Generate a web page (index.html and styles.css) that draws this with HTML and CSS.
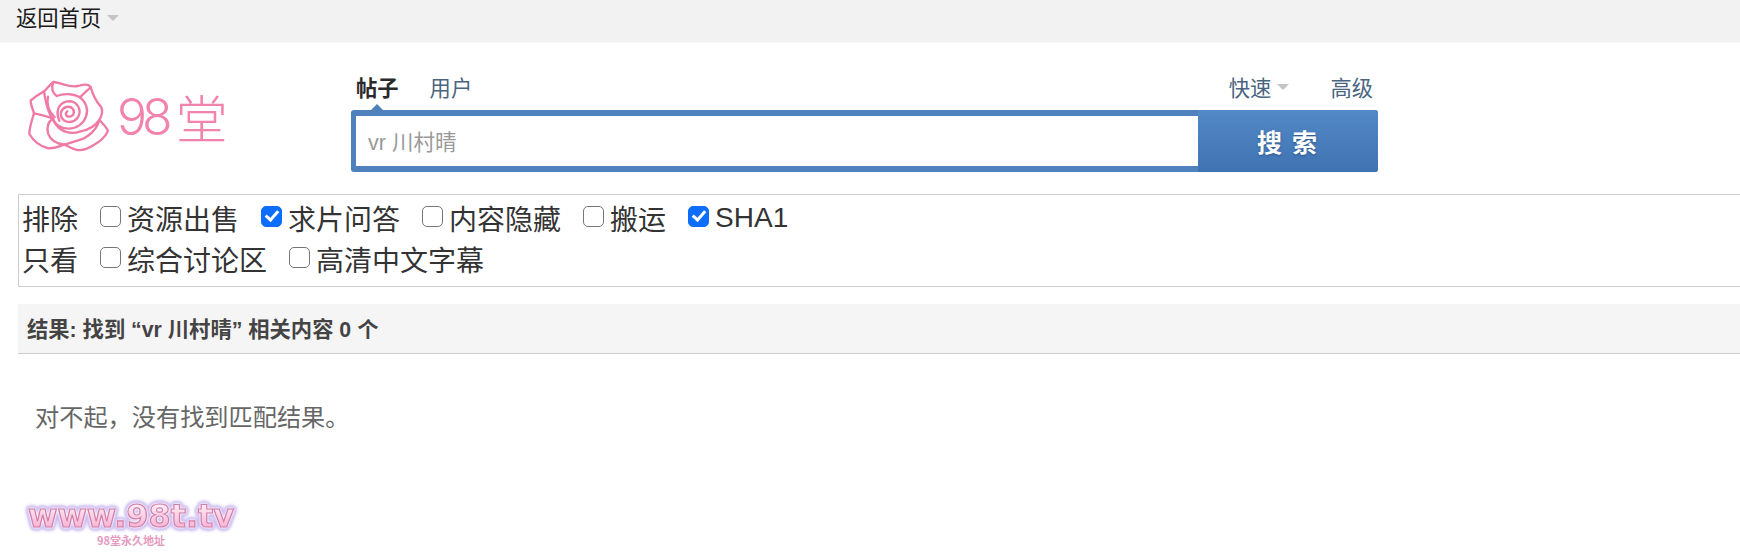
FILE: index.html
```html
<!DOCTYPE html>
<html>
  <head>
    <title>搜索 - 98堂</title>
    <link rel="stylesheet" href="styles.css">
  </head>
  <body>
    <div class="topbar">
      <a class="home-link">返回首页</a>
      <span class="caret"></span>
    </div>

    <div class="header">
      <div class="logo">
        <svg class="rose" viewBox="0 0 300 270">
          <g fill="none" stroke="#f07aa6" stroke-width="7" stroke-linecap="round" stroke-linejoin="round">
            <path d="M100 36 C125 38 150 54 172 48 C190 44 204 40 212 52 C218 72 226 92 244 112 C250 126 244 140 238 150 C248 160 258 170 264 182 C258 198 238 216 220 226 C205 236 190 242 172 240 C158 238 146 230 134 224 C118 228 100 238 82 234 C60 228 40 212 28 192 C28 172 36 150 42 130 C38 116 32 104 32 92 C44 80 60 72 72 64 C82 56 90 42 100 36 Z"/>
            <path d="M100 36 C92 54 98 70 110 78 C130 70 160 70 180 82 C198 96 206 118 198 140 C190 162 170 176 146 176 C124 176 104 164 98 146"/>
            <path d="M212 52 C200 62 190 72 180 82"/>
            <path d="M72 64 C76 90 84 130 98 146 C82 138 60 134 42 130"/>
            <path d="M98 146 C86 154 80 170 84 190 C92 212 112 222 134 224"/>
            <path d="M238 150 C224 170 204 180 182 184 C160 192 140 190 122 178 C112 170 104 160 98 146"/>
            <path d="M84 80 C78 104 88 128 104 142"/>
            <path d="M238 150 C232 176 206 204 172 212 C158 216 146 220 134 224"/>
            <path d="M118 152 C108 130 112 108 130 98 C150 88 172 96 178 118 C182 138 168 154 150 156 C130 156 118 140 124 124 C130 110 148 106 158 116 C166 126 160 140 148 140 C138 140 134 130 142 124"/>
          </g>
        </svg>
        <span class="logo-num">98</span>
        <span class="logo-han">堂</span>
      </div>

      <div class="search">
        <div class="search-tabs">
          <div class="tabs-left">
            <a class="tab tab-active">帖子</a>
            <a class="tab">用户</a>
          </div>
          <div class="tabs-right">
            <a class="tab">快速</a>
            <span class="caret caret-small"></span>
            <a class="tab tab-adv">高级</a>
          </div>
        </div>
        <div class="search-box">
          <input class="search-input" type="text" value="vr 川村晴">
          <button class="search-btn">搜索</button>
        </div>
      </div>
    </div>

    <div class="filters">
      <div class="filter-row">
        <span class="filter-label">排除</span>
        <label class="filter-item"><input type="checkbox">资源出售</label>
        <label class="filter-item"><input type="checkbox" checked>求片问答</label>
        <label class="filter-item"><input type="checkbox">内容隐藏</label>
        <label class="filter-item"><input type="checkbox">搬运</label>
        <label class="filter-item"><input type="checkbox" checked>SHA1</label>
      </div>
      <div class="filter-row">
        <span class="filter-label">只看</span>
        <label class="filter-item"><input type="checkbox">综合讨论区</label>
        <label class="filter-item"><input type="checkbox">高清中文字幕</label>
      </div>
    </div>

    <div class="result-head">结果: 找到 “vr 川村晴” 相关内容 0 个</div>
    <p class="no-result">对不起，没有找到匹配结果。</p>

    <div class="footer-logo">
      <svg width="240" height="60" viewBox="0 0 240 60">
        <defs>
          <linearGradient id="pinkfill" x1="0" y1="0" x2="0" y2="1">
            <stop offset="0" stop-color="#ffffff"/>
            <stop offset="1" stop-color="#f8a0ca"/>
          </linearGradient>
        </defs>
        <text class="site-text" x="28" y="36" textLength="206" lengthAdjust="spacingAndGlyphs" fill="url(#pinkfill)">www.98t.tv</text>
        <text class="site-sub" x="97" y="54" textLength="68" lengthAdjust="spacingAndGlyphs">98堂永久地址</text>
      </svg>
    </div>
  </body>
</html>
```

FILE: styles.css
```css
body {
    margin: 0;
    background: #fff;
    font-family: "Liberation Sans", "Noto Sans CJK SC", sans-serif;
    color: #444;
    overflow: hidden;
}
.topbar {
    display: flex;
    align-items: center;
    height: 42px;
    padding-left: 16px;
    background: #f2f2f2;
    border-bottom: 1px solid #f7f7f7;
}
.home-link {
    font-size: 21.3px;
    line-height: 36px;
    height: 36px;
    margin-bottom: 4px;
    color: #1a1a1a;
}
.caret {
    width: 0;
    height: 0;
    margin-left: 6px;
    border-left: 6px solid transparent;
    border-right: 6px solid transparent;
    border-top: 6px solid #c4c4c4;
}
.topbar .caret {
    margin-bottom: 6px;
}
.header {
    display: flex;
    height: 151px;
}
.logo {
    display: flex;
    align-items: center;
    width: 351px;
    height: 120px;
    padding-left: 20px;
    padding-top: 27px;
    box-sizing: border-box;
    color: #f283ac;
}
.rose {
    width: 100px;
    height: 90px;
    margin-top: -3px;
    flex: none;
}
.logo-num {
    margin-left: -3px;
    font-family: "Inter", sans-serif;
    font-size: 50px;
    font-weight: 300;
    letter-spacing: -5px;
}
.logo-han {
    margin-left: 8px;
    font-family: "Noto Sans CJK SC", sans-serif;
    font-size: 52px;
    font-weight: 300;
}
.search {
    width: 1027px;
}
.search-tabs {
    display: flex;
    justify-content: space-between;
    align-items: center;
    height: 67px;
    padding-top: 20px;
    box-sizing: border-box;
}
.tabs-left, .tabs-right {
    display: flex;
    align-items: center;
}
.tabs-left {
    padding-left: 5px;
    gap: 31px;
}
.tabs-right {
    padding-right: 5px;
}
.tab {
    font-size: 21.3px;
    color: #4a6580;
}
.tab-active {
    position: relative;
    font-weight: bold;
    color: #2a2a2a;
}
.tab-active::after {
    content: "";
    position: absolute;
    left: 14px;
    bottom: -9px;
    border-left: 7px solid transparent;
    border-right: 7px solid transparent;
    border-bottom: 7px solid #4f81bd;
}
.tab-adv {
    margin-left: 41px;
}
.search-box {
    display: flex;
    height: 62px;
    border-radius: 3px;
    overflow: hidden;
    background: #4f81bd;
}
.search-input {
    width: 842px;
    height: 50px;
    margin: 6px 0 6px 5px;
    padding: 0 12px 2px;
    border: 0;
    outline: 0;
    box-sizing: border-box;
    font-family: inherit;
    font-size: 21.5px;
    color: #999;
    background: #fff;
}
.search-btn {
    flex: 1;
    padding: 0;
    border: 0;
    background: linear-gradient(#5389c8, #3f72b0);
    color: #fff;
    font-family: inherit;
    font-size: 25px;
    font-weight: bold;
    letter-spacing: 10px;
    text-indent: 8px;
    text-shadow: 0 1px 2px #2f5488;
}
.filters {
    margin-left: 18px;
    height: 93px;
    padding: 2px 0 0 3px;
    box-sizing: border-box;
    border: 1px solid #ccc;
    border-right: 0;
    font-size: 28px;
    color: #333;
}
.filter-row {
    display: flex;
    align-items: center;
    gap: 22px;
    height: 41.5px;
}
.filter-item {
    display: flex;
    align-items: center;
    gap: 6px;
}
.filter-item input {
    position: relative;
    appearance: none;
    width: 21px;
    height: 21px;
    margin: 0 0 3px;
    border: 1.5px solid #767676;
    border-radius: 5px;
    background: #fff;
}
.filter-item input:checked {
    border-color: #0d6efd;
    background: #0d6efd;
}
.filter-item input:checked::after {
    content: "";
    position: absolute;
    left: 6px;
    top: 1.5px;
    width: 5px;
    height: 10px;
    border: solid #fff;
    border-width: 0 3px 3px 0;
    transform: rotate(42deg);
}
.result-head {
    margin: 17px 0 0 18px;
    height: 50px;
    line-height: 52px;
    padding-left: 9px;
    box-sizing: border-box;
    background: #f5f5f5;
    border-bottom: 1px solid #ccc;
    font-size: 21.3px;
    font-weight: bold;
    color: #444;
}
.no-result {
    margin: 44px 0 0 35px;
    font-size: 24.2px;
    line-height: 40px;
    color: #666;
}
.footer-logo {
    margin-top: 53px;
    height: 60px;
}
.footer-logo svg {
    display: block;
}
.site-text {
    font-family: "DejaVu Sans", sans-serif;
    font-weight: bold;
    font-size: 32px;
    stroke: #d07fa8;
    stroke-width: 1.2;
    filter: drop-shadow(0 0 1px #fdf8ff) drop-shadow(0 0 1px #fdf8ff) drop-shadow(0 0 1.5px #c6b4ee) drop-shadow(0 0 1px #c6b4ee) drop-shadow(0 0 1px #c6b4ee);
}
.site-sub {
    font-family: "Noto Sans CJK SC", sans-serif;
    font-size: 11px;
    font-weight: bold;
    fill: #e59ac0;
}
```
